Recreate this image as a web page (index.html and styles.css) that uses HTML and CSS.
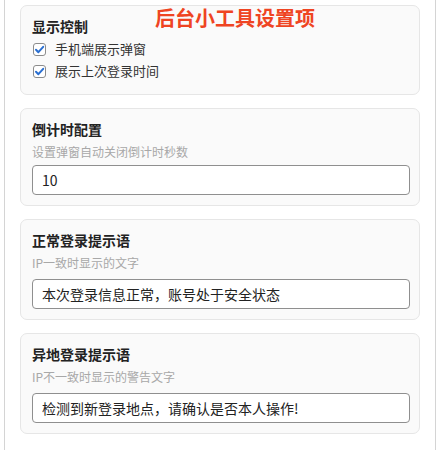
FILE: index.html
```html
<!DOCTYPE html>
<html lang="zh-CN">
<head>
<meta charset="utf-8">
<title>后台小工具设置项</title>
<link rel="stylesheet" href="styles.css">
</head>
<body>
<div class="panel">
  <div class="annotation">后台小工具设置项</div>

  <section class="card card-checks">
    <div class="card-title">显示控制</div>
    <div class="checks">
      <label class="check">
        <span class="box"><svg viewBox="0 0 13 13" width="13" height="13"><path d="M3 6.8 L5.4 9.2 L10.2 3.8" fill="none" stroke="#2a6fd1" stroke-width="2" stroke-linecap="round" stroke-linejoin="round"/></svg></span>
        <span class="check-text">手机端展示弹窗</span>
      </label>
      <label class="check">
        <span class="box"><svg viewBox="0 0 13 13" width="13" height="13"><path d="M3 6.8 L5.4 9.2 L10.2 3.8" fill="none" stroke="#2a6fd1" stroke-width="2" stroke-linecap="round" stroke-linejoin="round"/></svg></span>
        <span class="check-text">展示上次登录时间</span>
      </label>
    </div>
  </section>

  <section class="card">
    <div class="card-title">倒计时配置</div>
    <div class="card-desc">设置弹窗自动关闭倒计时秒数</div>
    <input class="field field-num" type="text" value="10">
  </section>

  <section class="card">
    <div class="card-title">正常登录提示语</div>
    <div class="card-desc">IP一致时显示的文字</div>
    <input class="field" type="text" value="本次登录信息正常，账号处于安全状态">
  </section>

  <section class="card">
    <div class="card-title">异地登录提示语</div>
    <div class="card-desc">IP不一致时显示的警告文字</div>
    <input class="field" type="text" value="检测到新登录地点，请确认是否本人操作!">
  </section>
</div>
</body>
</html>
```

FILE: styles.css
```css
html, body {
  margin: 0;
  padding: 0;
  background: #ffffff;
}

body {
  font-family: "Noto Sans CJK SC", "Noto Sans", "Liberation Sans", sans-serif;
  color: #222;
}

.panel {
  position: relative;
  margin: 0 1px 0 4px;
  min-height: 450px;
  box-sizing: border-box;
  border-left: 1px solid #d4d4d4;
  border-right: 1px solid #d4d4d4;
  padding: 5px 15px 0 15px;
  display: flex;
  flex-direction: column;
  gap: 13px;
}

.annotation {
  position: absolute;
  left: 150px;
  top: 6px;
  font-size: 20px;
  line-height: 24px;
  font-weight: 700;
  color: #ef4422;
  letter-spacing: 0;
}

.card {
  background: #fafafa;
  border: 1px solid #e6e6e6;
  border-radius: 7px;
  padding: 10px 9px 10px 11px;
  display: flex;
  flex-direction: column;
}

.card-title {
  font-size: 14px;
  line-height: 20px;
  font-weight: 700;
  color: #222;
}

.card-desc {
  margin-top: 4px;
  font-size: 12px;
  line-height: 18px;
  color: #a8a8a8;
}

.checks {
  margin-top: 2px;
  margin-bottom: 2px;
  display: flex;
  flex-direction: column;
}

.check {
  display: flex;
  align-items: center;
  height: 22px;
}

.box {
  width: 13px;
  height: 13px;
  box-sizing: border-box;
  border: 1px solid #8c8c8c;
  border-radius: 3px;
  background: #fff;
  display: flex;
  align-items: center;
  justify-content: center;
  margin-left: 1px;
  margin-right: 9px;
}

.box svg {
  display: block;
  flex: none;
}

.check-text {
  font-size: 13px;
  line-height: 18px;
  color: #333;
}

.field {
  margin-top: 7px;
  height: 30px;
  box-sizing: border-box;
  width: 100%;
  border: 1px solid #8f8f8f;
  border-radius: 4px;
  background: #fff;
  padding: 0 9px;
  font-family: "Noto Sans CJK SC", "Noto Sans", "Liberation Sans", sans-serif;
  font-size: 14px;
  color: #222;
  outline: none;
}

.field-num {
  margin-top: 4px;
}
```
